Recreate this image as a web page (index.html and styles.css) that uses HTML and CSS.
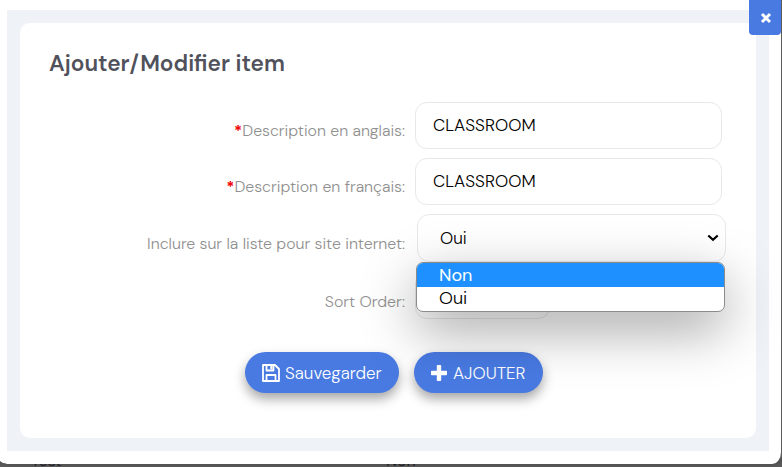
FILE: index.html
```html
<!DOCTYPE html>
<html lang="fr">
<head>
<meta charset="utf-8">
<title>Ajouter/Modifier item</title>
<link rel="stylesheet" href="styles.css">
</head>
<body>
<div class="page-row"><span>Test</span><span>Non</span></div>
<main class="modal">
  <button class="close" aria-label="Fermer"><svg width="12" height="12" viewBox="0 0 12 12"><path d="M2 2l8 8M10 2l-8 8"/></svg></button>
  <div class="frame">
    <section class="card">
      <h1>Ajouter/Modifier item</h1>
      <form class="form">
        <div class="row">
          <span class="label"><b>*</b>Description en anglais:</span>
          <div class="field">CLASSROOM</div>
        </div>
        <div class="row">
          <span class="label"><b>*</b>Description en français:</span>
          <div class="field">CLASSROOM</div>
        </div>
        <div class="row row-site">
          <span class="label">Inclure sur la liste pour site internet:</span>
          <div class="field select"><span>Oui</span>
            <svg width="12" height="8" viewBox="0 0 12 8"><path d="M1.300 1.500L6 5.800l4.700-4.300"/></svg>
            <div class="menu">
              <div class="option active">Non</div>
              <div class="option">Oui</div>
            </div>
          </div>
        </div>
        <div class="row row-sort">
          <span class="label">Sort Order:</span>
          <div class="field short"></div>
        </div>
      </form>
      <div class="actions">
        <button class="btn save">
          <svg width="18" height="18" viewBox="0 0 18 18"><path class="line" d="M1 1h12l4 4v12H1zM4.500 17v-6h9v6M4.500 1v5.500h7V1"/><path class="fill" d="M8.300 2h2.200v3.500H8.300z"/></svg>
          <span>Sauvegarder</span>
        </button>
        <button class="btn add">
          <svg width="16" height="16" viewBox="0 0 16 16"><path class="fill" d="M6.500 0h3q.7 0 .7.7v5.100h5.100q.7 0 .7.7v3q0 .7-.7.7h-5.100v5.100q0 .7-.7.7h-3q-.7 0-.7-.7v-5.100H.7q-.7 0-.7-.7v-3q0-.7.7-.7h5.100V.7q0-.7.7-.7z"/></svg>
          <span>AJOUTER</span>
        </button>
      </div>
    </section>
  </div>
</main>
</body>
</html>
```
FILE: styles.css
```css
* { box-sizing: border-box; }
body {
  margin: 0;
  height: 467px;
  overflow: hidden;
  position: relative;
  background: #5c5c5c;
  font: 300 17px/20px "DM Sans", Inter, "Liberation Sans", sans-serif;
}
.page-row {
  position: absolute;
  left: 31px;
  top: 451px;
  display: grid;
  grid-template-columns: 355px auto;
  color: #24262c;
  font-size: 16px;
  font-weight: 400;
}
.modal {
  position: relative;
  width: 787px;
  height: 464px;
  margin-left: -3px;
  padding: 10px 15px 13px 10px;
  background: #fff;
  background-clip: padding-box;
  border-right: 3px solid transparent;
  border-radius: 0 0 12px 10px;
  box-shadow: 0 0 5px rgba(0, 0, 0, .25);
}
.frame {
  width: 762px;
  height: 441px;
  padding: 13px;
  background: #eff3f7;
}
.card {
  height: 415px;
  padding: 29px 30px 0 29px;
  background: #fff;
  border-radius: 10px;
}
h1 {
  margin: 0 0 26px;
  font-size: 22.6px;
  font-weight: 600;
  line-height: 24px;
  white-space: nowrap;
  color: #50515b;
}
.form {
  display: grid;
  gap: 9px;
}
.row {
  display: grid;
  grid-template-columns: 356px 311px;
  column-gap: 10px;
  align-items: start;
}
.label {
  padding-top: 19px;
  text-align: right;
  white-space: nowrap;
  font-size: 15.9px;
  color: #909090;
}
.row-site .label, .row-sort .label { padding-top: 20px; }
.label b { color: #f00000; font-weight: 700; }
.field {
  display: flex;
  align-items: center;
  width: 307px;
  height: 47px;
  padding: 0 17px 2px;
  border: 1px solid #e8e8e8;
  border-radius: 12px;
  color: #000;
  font-size: 17.1px;
}
.select {
  position: relative;
  justify-content: space-between;
  width: 309px;
  height: 48px;
  margin-left: 2px;
  padding: 0 6px 0 22px;
}
.select > span { margin-top: -1px; }
.select svg { fill: none; stroke: #000; stroke-width: 2.2; }
.menu {
  position: absolute;
  z-index: 3;
  left: -2px;
  top: 47px;
  width: 309px;
  height: 50px;
  overflow: hidden;
  background: #fff;
  border: 1px solid #8b8b8b;
  border-radius: 7px;
  box-shadow: 0 18px 54px rgba(0, 0, 0, .36);
}
.option {
  height: 24px;
  padding-left: 22px;
  line-height: 23px;
  font-size: 18px;
}
.option.active { background: #1e90ff; color: #fff; line-height: 24px; font-weight: 400; }
.row-sort { margin-top: 1px; }
.short { width: 135px; }
.actions {
  display: flex;
  gap: 15px;
  margin: 33px 0 0 196px;
}
.btn {
  display: flex;
  align-items: center;
  height: 41px;
  border: 0;
  border-radius: 21px;
  background: #487ae2;
  color: #fff;
  box-shadow: 0 6px 12px rgba(0, 0, 0, .35);
  font: inherit;
  font-weight: 350;
  white-space: nowrap;
}
.save { width: 154px; padding: 0 0 0 17px; gap: 5px; }
.add { width: 129px; padding: 0 0 0 17px; gap: 6px; }
.line { fill: none; stroke: #fff; stroke-width: 1.8; stroke-linejoin: round; }
.fill { fill: #fff; }
.close {
  position: absolute;
  z-index: 5;
  right: 0;
  top: 0;
  display: flex;
  align-items: center;
  justify-content: center;
  width: 32px;
  height: 35px;
  padding: 0 0 0 1px;
  border: 0;
  border-radius: 0 0 4px 4px;
  background: #487ae2;
}
.close svg { stroke: #fff; stroke-width: 3; }
```
